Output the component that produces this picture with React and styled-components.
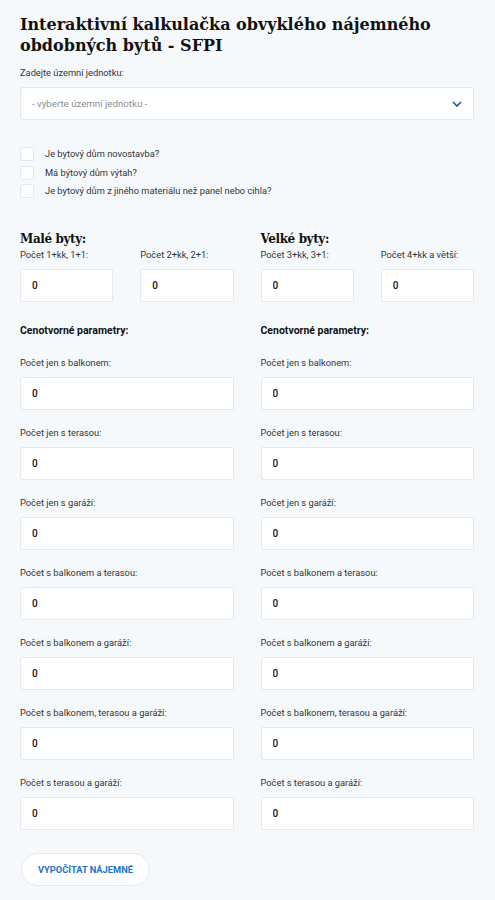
import React from "react";
import styled, { createGlobalStyle } from "styled-components";

const GlobalStyle = createGlobalStyle`
  html, body {
    margin: 0;
    padding: 0;
    background: #f6f9fc;
  }
  body {
    font-family: Roboto, "Liberation Sans", Arial, sans-serif;
    color: #222;
  }
  * { box-sizing: border-box; }
`;

const Page = styled.div`
  padding: 14px 21px 14px 20px;
`;

const Title = styled.h1`
  margin: 0 0 10px;
  font-family: "DejaVu Serif", "Liberation Serif", serif;
  font-weight: 700;
  font-size: 16px;
  line-height: 21px;
  color: #111;
`;

const Label = styled.label`
  display: block;
  font-size: 9.3px;
  line-height: 14px;
  color: #333;
  margin-bottom: 7px;
`;

const SelectBox = styled.div`
  height: 33px;
  background: #fff;
  border: 1px solid #e4e7eb;
  border-radius: 2px;
  display: flex;
  align-items: center;
  justify-content: space-between;
  padding: 0 11px 0 11px;
  font-size: 9.7px;
  color: #8a8f95;
`;

const Checks = styled.div`
  display: flex;
  flex-direction: column;
  gap: 4.5px;
  margin-top: 27px;
`;

const CheckRow = styled.label`
  display: flex;
  align-items: center;
  gap: 11px;
  font-size: 9.3px;
  line-height: 14px;
  color: #333;
`;

const Box = styled.span`
  width: 14px;
  height: 14px;
  background: #fff;
  border: 1px solid #e4e7eb;
  border-radius: 2px;
  flex-shrink: 0;
`;

const Grid = styled.div`
  display: grid;
  grid-template-columns: repeat(${(p) => p.cols}, 1fr);
  column-gap: 27px;
  margin-top: ${(p) => p.top || 0}px;
`;

const Group = styled.div`
  grid-column: span 2;
  display: grid;
  grid-template-columns: 1fr 1fr;
  column-gap: 27px;
`;

const GroupTitle = styled.h2`
  grid-column: span 2;
  margin: 0;
  font-family: "DejaVu Serif", "Liberation Serif", serif;
  font-weight: 700;
  font-size: 12px;
  letter-spacing: -0.4px;
  line-height: 18px;
  color: #111;
`;

const Column = styled.div`
  display: flex;
  flex-direction: column;
`;

const ParamTitle = styled.div`
  font-size: 10.5px;
  font-weight: 700;
  line-height: 14px;
  color: #111;
  margin-bottom: 18px;
`;

const Field = styled.div`
  margin-bottom: ${(p) => (p.last ? 0 : 16)}px;
`;

const Input = styled.input`
  display: block;
  width: 100%;
  height: 33px;
  background: #fff;
  border: 1px solid #e4e7eb;
  border-radius: 2px;
  padding: 0 11px;
  font-family: inherit;
  font-size: 10px;
  font-weight: 500;
  color: #111;
  outline: none;
`;

const Button = styled.button`
  margin-top: 23px;
  margin-left: 1px;
  height: 33px;
  width: 129px;
  border-radius: 17px;
  border: 1px solid #e4e7eb;
  background: #fff;
  font-family: inherit;
  font-size: 9.3px;
  font-weight: 700;
  color: #1b73c6;
  text-transform: uppercase;
  cursor: pointer;
`;

const Chevron = () => (
  <svg width="10" height="6" viewBox="0 0 10 6">
    <path d="M1 1l4 4 4-4" fill="none" stroke="#1d4f9e" strokeWidth="1.6" />
  </svg>
);

const params = [
  "Počet jen s balkonem:",
  "Počet jen s terasou:",
  "Počet jen s garáží:",
  "Počet s balkonem a terasou:",
  "Počet s balkonem a garáží:",
  "Počet s balkonem, terasou a garáží:",
  "Počet s terasou a garáží:",
];

const ParamColumn = () => (
  <Column>
    <ParamTitle>Cenotvorné parametry:</ParamTitle>
    {params.map((p, i) => (
      <Field key={p} last={i === params.length - 1}>
        <Label>{p}</Label>
        <Input defaultValue="0" />
      </Field>
    ))}
  </Column>
);

const App = () => {
  return (
    <Page>
      <GlobalStyle />
      <Title>
        Interaktivní kalkulačka obvyklého nájemného obdobných bytů - SFPI
      </Title>
      <Label>Zadejte územní jednotku:</Label>
      <SelectBox>
        <span>- vyberte územní jednotku -</span>
        <Chevron />
      </SelectBox>

      <Checks>
        <CheckRow>
          <Box />
          Je bytový dům novostavba?
        </CheckRow>
        <CheckRow>
          <Box />
          Má býtový dům výtah?
        </CheckRow>
        <CheckRow>
          <Box />
          Je bytový dům z jiného materiálu než panel nebo cihla?
        </CheckRow>
      </Checks>

      <Grid cols={4} top={32}>
        <Group>
          <GroupTitle>Malé byty:</GroupTitle>
          <Field last>
            <Label>Počet 1+kk, 1+1:</Label>
            <Input defaultValue="0" />
          </Field>
          <Field last>
            <Label>Počet 2+kk, 2+1:</Label>
            <Input defaultValue="0" />
          </Field>
        </Group>
        <Group>
          <GroupTitle>Velké byty:</GroupTitle>
          <Field last>
            <Label>Počet 3+kk, 3+1:</Label>
            <Input defaultValue="0" />
          </Field>
          <Field last>
            <Label>Počet 4+kk a větší:</Label>
            <Input defaultValue="0" />
          </Field>
        </Group>
      </Grid>

      <Grid cols={2} top={22}>
        <ParamColumn />
        <ParamColumn />
      </Grid>

      <Button>Vypočítat nájemné</Button>
    </Page>
  );
};

export default App;
